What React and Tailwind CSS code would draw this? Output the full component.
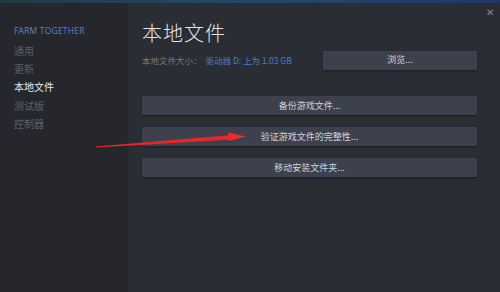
import React from 'react';

const cjk = { fontFamily: '"Noto Sans CJK SC", "Noto Sans", sans-serif' };

function SideItem({ label, active }) {
  return (
    <div
      className={`h-[18.3px] leading-[18.3px] text-[10px] ${active ? 'text-[#e8e8e8]' : 'text-[#5c6068]'}`}
    >
      {label}
    </div>
  );
}

function ActionButton({ label }) {
  return (
    <button className="w-full h-[19px] bg-[#3c414d] text-[#d2d4d8] text-[9px] leading-[19px] rounded-[1px] shadow-[0_1px_2px_rgba(0,0,0,0.4)]">
      {label}
    </button>
  );
}

export default function App() {
  return (
    <div className="relative w-[500px] h-[292px] overflow-hidden bg-[#2a2d34] flex flex-col" style={cjk}>
      {/* top accent strip */}
      <div className="h-[3px] bg-gradient-to-r from-[#1e3b45] via-[#244868] to-[#1f3767]" />

      <div className="flex flex-1">
        {/* Sidebar */}
        <div className="w-[128px] bg-[#25272c] pl-[14px] pt-[22px]">
          <div className="text-[8.5px] text-[#5a86c4] tracking-[0.2px] mb-[4px]" style={{ fontFamily: '"Open Sans", sans-serif' }}>
            FARM TOGETHER
          </div>
          <SideItem label="通用" />
          <SideItem label="更新" />
          <SideItem label="本地文件" active />
          <SideItem label="测试版" />
          <SideItem label="控制器" />
        </div>

        {/* Main */}
        <div className="relative flex-1 pl-[14px] pr-[23px] pt-[17px]">
          <div className="absolute right-[6px] top-[4px] text-[#8a8d94] text-[10px] leading-none">✕</div>

          <div className="text-[20px] leading-[26px] text-[#e4e5e7] font-light tracking-[1px]">本地文件</div>

          <div className="flex items-center mt-[4px] h-[20px]">
            <div className="w-[181px] text-[8.5px] whitespace-nowrap">
              <span className="text-[#73777e]">本地文件大小：</span>
              <span className="text-[#4a7bc9] ml-[4px]">驱动器 D: 上为 1.03 GB</span>
            </div>
            <button className="flex-1 h-[19px] bg-[#3c414d] text-[#d2d4d8] text-[9px] rounded-[1px] shadow-[0_1px_2px_rgba(0,0,0,0.4)]">
              浏览...
            </button>
          </div>

          <div className="flex flex-col gap-[12px] mt-[26px]">
            <ActionButton label="备份游戏文件..." />
            <ActionButton label="验证游戏文件的完整性..." />
            <ActionButton label="移动安装文件夹..." />
          </div>
        </div>
      </div>

      {/* red annotation arrow */}
      <svg className="absolute left-0 top-0 pointer-events-none" width="500" height="292">
        <polygon points="96,146.5 232,135 233,139.5 96,147.5" fill="#e8262a" />
        <polygon points="228,132.5 246,136.5 229,141" fill="#ee2a2c" />
      </svg>
    </div>
  );
}
